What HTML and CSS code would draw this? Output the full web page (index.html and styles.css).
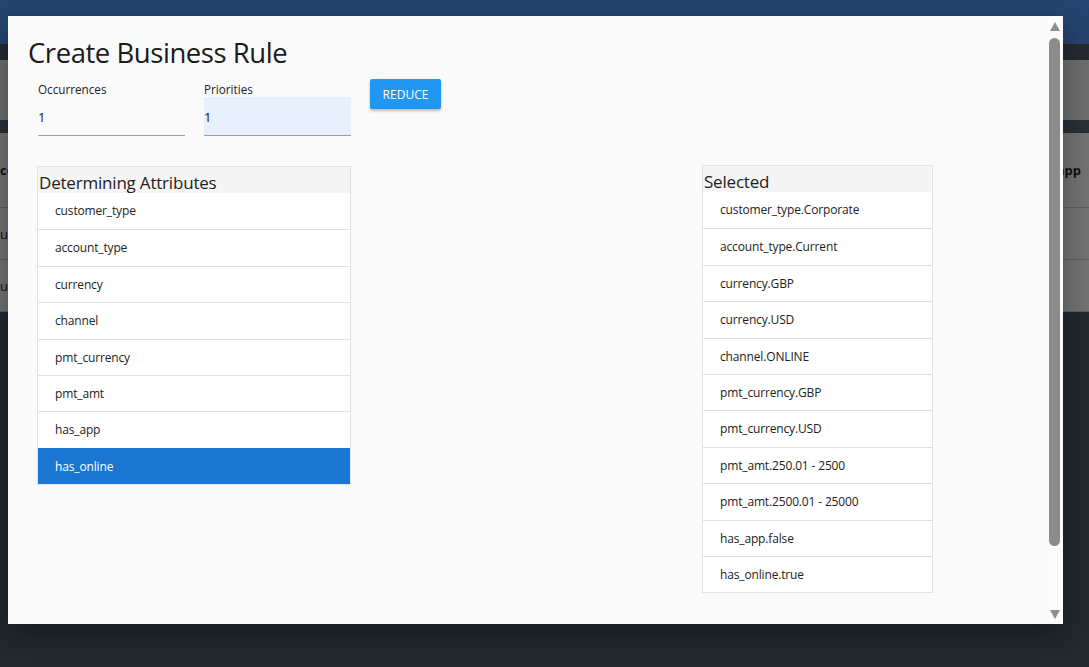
FILE: index.html
```html
<!DOCTYPE html>
<html>
<head>
<meta charset="utf-8">
<link rel="stylesheet" href="styles.css">
</head>
<body>
<div class="page">
  <div class="topbar"></div>
  <div class="band"></div>
  <div class="toolbar"></div>
  <div class="band2"></div>
  <div class="table">
    <div class="trow thead"><span class="lcell">cc</span><span class="rcell">has_app</span></div>
    <div class="trow"><span class="lcell">u</span><span class="rcell"></span></div>
    <div class="trow"><span class="lcell">u</span><span class="rcell"></span></div>
  </div>
</div>

<div class="modal">
  <div class="modal-body">
    <h1 class="title">Create Business Rule</h1>
    <div class="form-row">
      <label class="field">
        <span class="field-label">Occurrences</span>
        <span class="field-input">1</span>
      </label>
      <label class="field">
        <span class="field-label">Priorities</span>
        <span class="field-input filled">1</span>
      </label>
      <button class="btn">REDUCE</button>
    </div>
    <div class="lists">
      <div class="panel panel-left">
        <div class="panel-head">Determining Attributes</div>
        <div class="item">customer_type</div>
        <div class="item">account_type</div>
        <div class="item">currency</div>
        <div class="item">channel</div>
        <div class="item">pmt_currency</div>
        <div class="item">pmt_amt</div>
        <div class="item">has_app</div>
        <div class="item active">has_online</div>
      </div>
      <div class="panel panel-right">
        <div class="panel-head">Selected</div>
        <div class="item">customer_type.Corporate</div>
        <div class="item">account_type.Current</div>
        <div class="item">currency.GBP</div>
        <div class="item">currency.USD</div>
        <div class="item">channel.ONLINE</div>
        <div class="item">pmt_currency.GBP</div>
        <div class="item">pmt_currency.USD</div>
        <div class="item">pmt_amt.250.01 - 2500</div>
        <div class="item">pmt_amt.2500.01 - 25000</div>
        <div class="item">has_app.false</div>
        <div class="item">has_online.true</div>
      </div>
    </div>
  </div>
  <div class="scrollbar">
    <span class="arrow up"></span>
    <span class="thumb"></span>
    <span class="arrow down"></span>
  </div>
</div>
</body>
</html>
```

FILE: styles.css
```css
html, body {
  margin: 0;
  padding: 0;
}
body {
  width: 1089px;
  height: 667px;
  overflow: hidden;
  background: #22292f;
  font-family: "Open Sans", "Noto Sans", sans-serif;
  color: #212121;
}
.page {
  display: flex;
  flex-direction: column;
}
.topbar {
  height: 44px;
  background: linear-gradient(#244672, #24446d);
}
.band {
  height: 16px;
  background: #262b30;
}
.toolbar {
  height: 60px;
  background: #6f6f6f;
}
.band2 {
  height: 13px;
  background: #2b3035;
}
.table {
  background: #737373;
  display: flex;
  flex-direction: column;
}
.trow {
  height: 51px;
  border-bottom: 1px solid #5e5e5e;
  display: flex;
  justify-content: space-between;
  align-items: center;
  font-size: 13px;
  color: #111;
}
.thead {
  height: 74px;
  font-weight: 700;
}
.lcell {
  margin-left: 0;
}
.rcell {
  margin-right: 8px;
}

.modal {
  position: absolute;
  left: 8px;
  top: 16px;
  width: 1055px;
  height: 608px;
  background: #fafafa;
  box-shadow: 0 10px 30px rgba(0,0,0,0.35);
  display: flex;
}
.modal-body {
  flex: 1;
  padding: 18px 0 0 20px;
}
.title {
  margin: 0;
  font-size: 27.5px;
  letter-spacing: -0.45px;
  font-weight: 400;
  line-height: 38px;
  color: #1b1b1b;
}
.form-row {
  display: flex;
  align-items: flex-start;
  gap: 19px;
  margin: 7px 0 0 10px;
}
.field {
  display: flex;
  flex-direction: column;
  width: 147px;
}
.field-label {
  font-size: 11.7px;
  line-height: 20px;
  height: 18px;
  color: #222;
}
.field-input {
  height: 38px;
  line-height: 41px;
  border-bottom: 1px solid #9e9e9e;
  font-size: 13px;
  color: #111;
}
.field-input.filled {
  background: #e8f0fe;
}
.btn {
  margin-top: 0;
  width: 71px;
  height: 30px;
  border: none;
  border-radius: 2px;
  background: #2196f3;
  color: #fff;
  font-family: inherit;
  font-size: 12px;
  padding: 0;
  box-shadow: 0 2px 3px rgba(0,0,0,0.25);
}
.lists {
  display: flex;
  align-items: flex-start;
  gap: 351px;
  margin: 30px 0 0 9px;
}
.panel {
  border: 1px solid #e2e2e2;
  background: #fff;
}
.panel-left {
  width: 312px;
}
.panel-right {
  width: 229px;
  margin-top: -1px;
}
.panel-head {
  height: 26px;
  line-height: 31px;
  background: #f5f5f5;
  font-size: 17px;
  letter-spacing: -0.2px;
  color: #222;
  padding-left: 1px;
}
.item {
  height: 35.4px;
  line-height: 36.5px;
  border-top: 1px solid #e0e0e0;
  padding-left: 17px;
  font-size: 12px;
  letter-spacing: -0.15px;
  color: #222;
  white-space: nowrap;
}
.panel-head + .item {
  border-top: none;
  height: 36.4px;
}
.item.active {
  background: #1976d2;
  color: #fff;
  border-top-color: #1976d2;
}

.scrollbar {
  width: 17px;
  display: flex;
  flex-direction: column;
  align-items: center;
  background: #fbfbfb;
}
.arrow {
  width: 0;
  height: 0;
  border-left: 5.5px solid transparent;
  border-right: 5.5px solid transparent;
}
.arrow.up {
  margin-top: 6px;
  border-bottom: 9px solid #8e8e8e;
}
.arrow.down {
  margin-top: auto;
  margin-bottom: 5px;
  border-top: 9px solid #8e8e8e;
}
.thumb {
  margin-top: 7px;
  width: 11px;
  height: 508px;
  border-radius: 6px;
  background: #8c8c8c;
}
```
